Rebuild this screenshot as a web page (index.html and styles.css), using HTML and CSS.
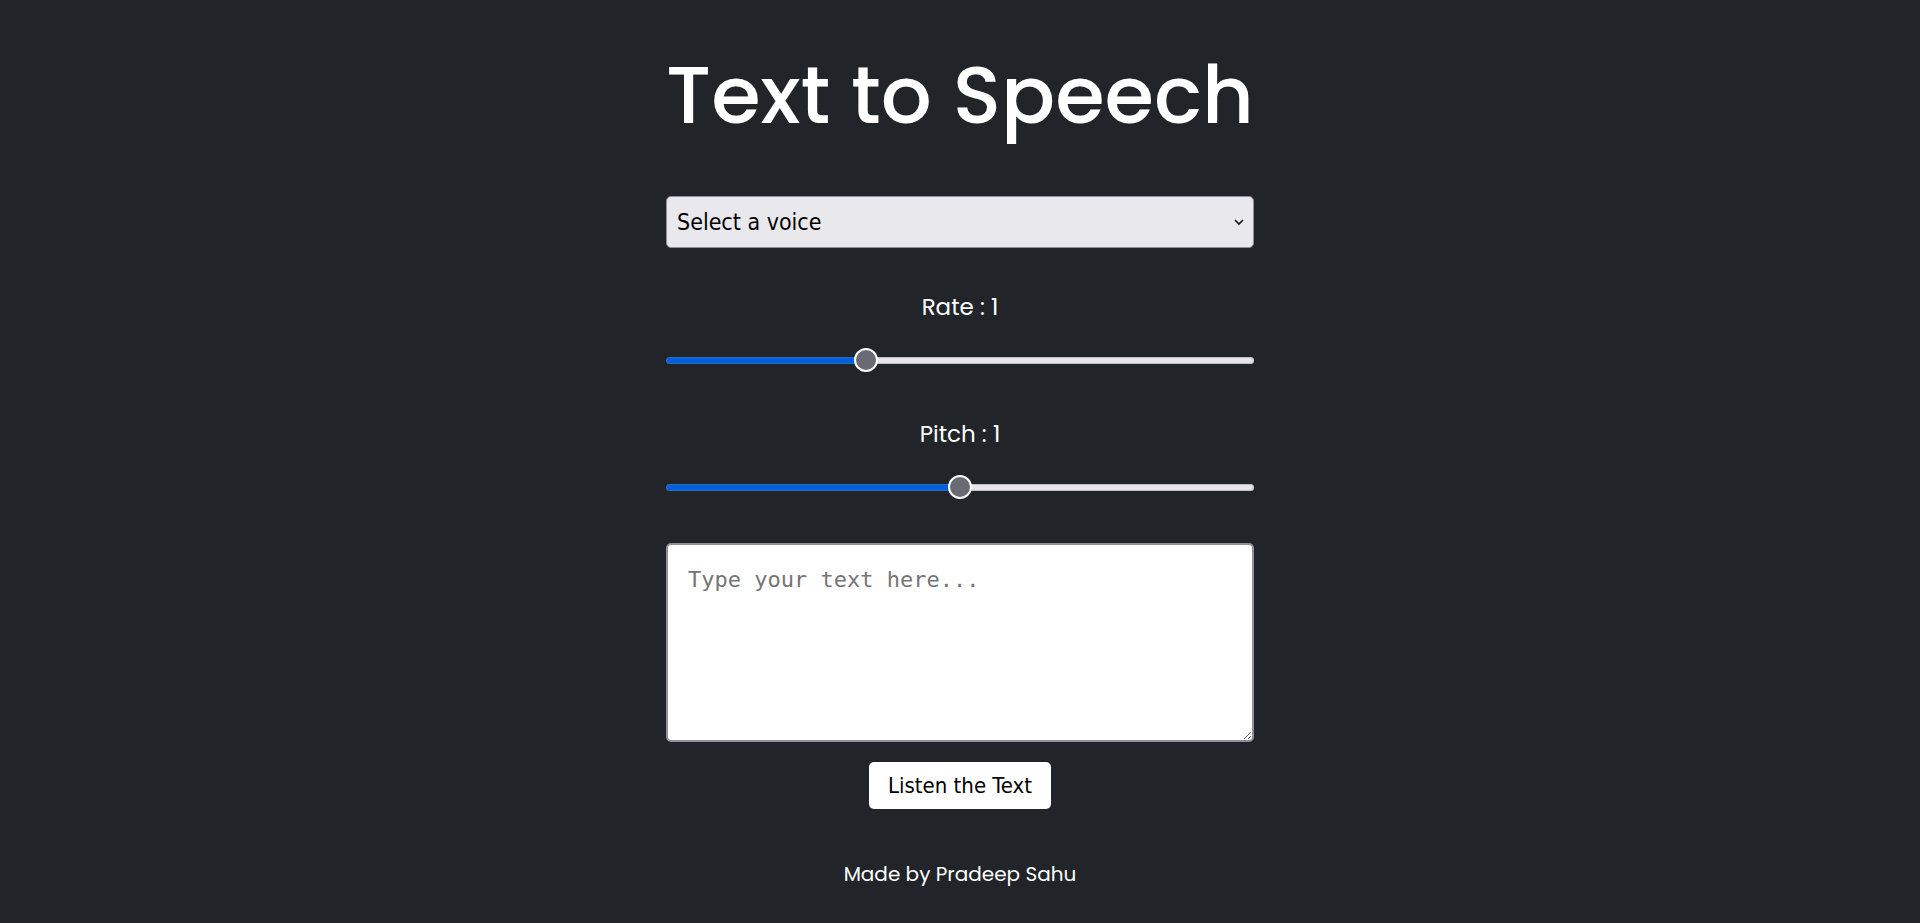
FILE: index.html
```html
<!DOCTYPE html>
<html lang="en">
<head>
<meta charset="utf-8">
<title>Text to Speech</title>
<link rel="stylesheet" href="styles.css">
</head>
<body>
<main class="app">
  <h1 class="title">Text to Speech</h1>
  <select class="voice">
    <option>Select a voice</option>
  </select>
  <div class="control">
    <label class="label" for="rate">Rate : 1</label>
    <input class="range" id="rate" type="range" min="0.5" max="2" step="0.1" value="1" style="--fill: 33.33%">
  </div>
  <div class="control">
    <label class="label" for="pitch">Pitch : 1</label>
    <input class="range" id="pitch" type="range" min="0" max="2" step="0.1" value="1" style="--fill: 50%">
  </div>
  <textarea class="text" placeholder="Type your text here..."></textarea>
  <button class="listen" type="button">Listen the Text</button>
  <footer class="footer">Made by Pradeep Sahu</footer>
</main>
</body>
</html>
```
FILE: styles.css
```css
* { box-sizing: border-box; }
html, body { margin: 0; padding: 0; }
body {
  background: #212529;
  color: #ffffff;
  font-family: "Poppins", "Inter", "Noto Sans", sans-serif;
  min-height: 100vh;
}
.app {
  width: 588px;
  margin: 0 auto;
  display: flex;
  flex-direction: column;
  align-items: center;
}
.title {
  margin: 40px 0 0;
  font-family: "Poppins", "Inter", sans-serif;
  font-size: 80px;
  font-weight: 500;
  line-height: 110px;
  white-space: nowrap;
}
.voice {
  margin-top: 46px;
  width: 100%;
  height: 52px;
  background-color: #e9e8ed;
  border: 1px solid #8f8f9d;
  border-radius: 5px;
  color: #000;
  font-family: "DejaVu Sans", sans-serif;
  font-stretch: condensed;
  font-size: 23px;
  padding: 0 10px;
  appearance: none;
  -webkit-appearance: none;
  background-image: url("data:image/svg+xml,%3Csvg xmlns='http://www.w3.org/2000/svg' width='12' height='8' viewBox='0 0 12 8'%3E%3Cpath d='M2 2l4 4 4-4' fill='none' stroke='%23111' stroke-width='1.6'/%3E%3C/svg%3E");
  background-repeat: no-repeat;
  background-position: right 8px center;
}
.control {
  width: 100%;
  display: flex;
  flex-direction: column;
  align-items: center;
}
.voice + .control { margin-top: 42px; }
.control + .control { margin-top: 45px; }
.label {
  font-size: 23px;
  line-height: 34px;
}
.range {
  margin: 24px 0 0;
  width: 100%;
  height: 24px;
  appearance: none;
  -webkit-appearance: none;
  background: transparent;
}
.range::-webkit-slider-runnable-track {
  height: 7px;
  border-radius: 4px;
  background: linear-gradient(to right, #0060df 0, #0060df var(--fill), #e4e4ea var(--fill), #e4e4ea 100%);
  box-shadow: inset 0 0 0 1px rgba(120, 120, 135, 0.35);
}
.range::-webkit-slider-thumb {
  -webkit-appearance: none;
  appearance: none;
  width: 24px;
  height: 24px;
  margin-top: -8.5px;
  border-radius: 50%;
  background: #6a6a75;
  border: 2px solid #ffffff;
}
.text {
  margin-top: 44px;
  width: 100%;
  height: 199px;
  border: 2px solid #8f8f9d;
  border-radius: 5px;
  background: #ffffff;
  padding: 22px 20px;
  font-family: "DejaVu Sans Mono", monospace;
  font-size: 22px;
  color: #000;
  resize: vertical;
}
.text::placeholder { color: #757575; }
.listen {
  margin-top: 20px;
  width: 182px;
  height: 47px;
  background: #ffffff;
  border: none;
  border-radius: 5px;
  color: #000;
  font-family: "DejaVu Sans", sans-serif;
  font-stretch: condensed;
  font-size: 22px;
}
.footer {
  margin-top: 50px;
  font-size: 20px;
}
```
